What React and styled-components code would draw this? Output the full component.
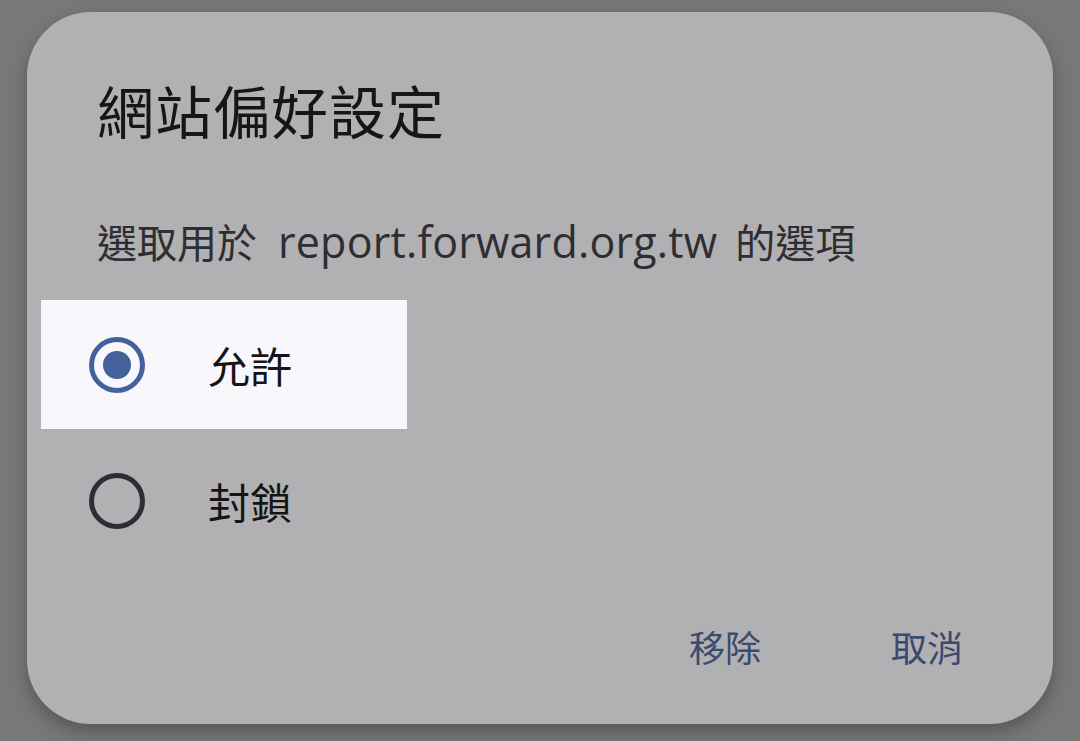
import React, { useState } from "react";
import styled, { createGlobalStyle } from "styled-components";

const GlobalStyle = createGlobalStyle`
  html, body {
    margin: 0;
    padding: 0;
    background: #787878;
    overflow: hidden;
  }
  body {
    font-family: "Open Sans", "Noto Sans CJK TC", "Noto Sans", sans-serif;
  }
`;

const Page = styled.div`
  width: 1080px;
  height: 741px;
  padding: 12px 27px 0 27px;
  box-sizing: border-box;
`;

const Dialog = styled.div`
  width: 1026px;
  height: 712px;
  box-sizing: border-box;
  background: #b1b0b2;
  border-radius: 64px;
  box-shadow: 0 8px 18px rgba(0, 0, 0, 0.28);
  display: flex;
  flex-direction: column;
  padding: 69px 90px 0 0;
`;

const Title = styled.h1`
  margin: 0 0 0 70px;
  font-family: "Noto Sans CJK TC", sans-serif;
  font-weight: 400;
  font-size: 57px;
  line-height: 57px;
  color: #161616;
  letter-spacing: 1px;
`;

const Subtitle = styled.p`
  margin: 83px 0 0 70px;
  font-family: "Noto Sans CJK TC", sans-serif;
  font-size: 40px;
  line-height: 40px;
  color: #2e2e32;
  white-space: nowrap;
`;

const Domain = styled.span`
  font-family: "Open Sans", sans-serif;
  font-size: 43px;
  letter-spacing: 0.2px;
  margin: 0 18px 0 21px;
`;

const Options = styled.div`
  margin-top: 38px;
  display: flex;
  flex-direction: column;
  gap: 7px;
`;

const Option = styled.label`
  display: flex;
  align-items: center;
  width: 366px;
  height: 129px;
  margin-left: 14px;
  padding-left: 48px;
  box-sizing: border-box;
  background: ${(p) => (p.$active ? "#f8f8fc" : "transparent")};
  cursor: pointer;
`;

const Ring = styled.span`
  width: 56px;
  height: 56px;
  box-sizing: border-box;
  border-radius: 50%;
  border: 5px solid ${(p) => (p.$checked ? "#44619b" : "#2d2d35")};
  display: flex;
  align-items: center;
  justify-content: center;
  flex-shrink: 0;
`;

const Dot = styled.span`
  width: 28px;
  height: 28px;
  border-radius: 50%;
  background: #44619b;
`;

const OptionText = styled.span`
  margin-left: 63px;
  font-family: "Noto Sans CJK TC", sans-serif;
  font-size: 42px;
  line-height: 42px;
  color: #151515;
`;

const Actions = styled.div`
  margin-top: auto;
  margin-bottom: 60px;
  display: flex;
  justify-content: flex-end;
  gap: 130px;
`;

const TextButton = styled.button`
  border: 0;
  background: none;
  padding: 0;
  font-family: "Noto Sans CJK TC", sans-serif;
  font-size: 36px;
  line-height: 36px;
  color: #3c4a6f;
  cursor: pointer;
`;

const choices = [
  { id: "allow", label: "允許" },
  { id: "block", label: "封鎖" },
];

export default function App() {
  const [value, setValue] = useState("allow");

  return (
    <>
      <GlobalStyle />
      <Page>
        <Dialog>
          <Title>網站偏好設定</Title>
          <Subtitle>
            選取用於<Domain>report.forward.org.tw</Domain>的選項
          </Subtitle>
          <Options>
            {choices.map((c) => (
              <Option
                key={c.id}
                $active={value === c.id}
                onClick={() => setValue(c.id)}
              >
                <Ring $checked={value === c.id}>
                  {value === c.id && <Dot />}
                </Ring>
                <OptionText>{c.label}</OptionText>
              </Option>
            ))}
          </Options>
          <Actions>
            <TextButton>移除</TextButton>
            <TextButton>取消</TextButton>
          </Actions>
        </Dialog>
      </Page>
    </>
  );
}
